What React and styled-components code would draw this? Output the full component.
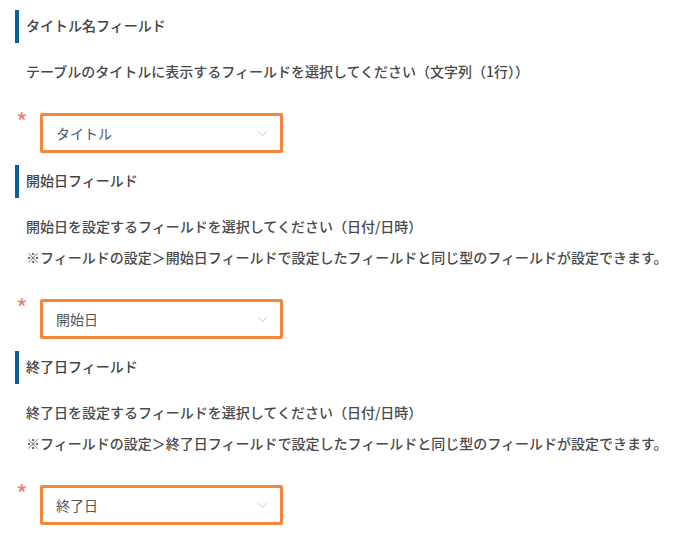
import React from "react";
import styled, { createGlobalStyle } from "styled-components";

const GlobalStyle = createGlobalStyle`
  html, body {
    margin: 0;
    padding: 0;
    background: #fff;
  }
  body {
    font-family: "Noto Sans CJK JP", "Noto Sans", sans-serif;
    color: #4a4a4a;
  }
`;

const sections = [
  {
    label: "タイトル名フィールド",
    desc: ["テーブルのタイトルに表示するフィールドを選択してください（文字列（1行））"],
    value: "タイトル",
  },
  {
    label: "開始日フィールド",
    desc: [
      "開始日を設定するフィールドを選択してください（日付/日時）",
      "※フィールドの設定＞開始日フィールドで設定したフィールドと同じ型のフィールドが設定できます。",
    ],
    value: "開始日",
  },
  {
    label: "終了日フィールド",
    desc: [
      "終了日を設定するフィールドを選択してください（日付/日時）",
      "※フィールドの設定＞終了日フィールドで設定したフィールドと同じ型のフィールドが設定できます。",
    ],
    value: "終了日",
  },
];

function Chevron() {
  return (
    <svg width="11" height="7" viewBox="0 0 11 7" fill="none">
      <path d="M1 1 L5.5 5.5 L10 1" stroke="#c2cbd0" strokeWidth="1" />
    </svg>
  );
}

function App() {
  return (
    <>
      <GlobalStyle />
      <Page>
        {sections.map((s) => (
          <Section key={s.label}>
            <Label>{s.label}</Label>
            <Desc>
              {s.desc.map((line) => (
                <DescLine key={line}>{line}</DescLine>
              ))}
            </Desc>
            <Row>
              <Required>*</Required>
              <Select>
                <Value>{s.value}</Value>
                <Chevron />
              </Select>
            </Row>
          </Section>
        ))}
      </Page>
    </>
  );
}

export default App;

let Page = styled.div`
  display: flex;
  flex-direction: column;
  gap: 12px;
  padding: 10px 0 0 15px;
`;

let Section = styled.section`
  display: flex;
  flex-direction: column;
`;

let Label = styled.div`
  height: 33px;
  border-left: 4px solid #0a5f96;
  padding: 0 0 3px 7px;
  box-sizing: border-box;
  display: flex;
  align-items: center;
  font-size: 14px;
  font-weight: 500;
  color: #444;
`;

let Desc = styled.div`
  margin-top: 13px;
  padding-left: 11px;
`;

let DescLine = styled.p`
  margin: 0;
  line-height: 31px;
  font-size: 14px;
  font-weight: 500;
  color: #4a4a4a;
  white-space: nowrap;
`;

let Row = styled.div`
  display: flex;
  margin-top: 26px;
`;

let Required = styled.span`
  width: 24px;
  padding-left: 1px;
  margin-top: -3px;
  font-size: 25px;
  line-height: 22px;
  color: #f07e6b;
`;

let Select = styled.div`
  box-sizing: border-box;
  width: 243px;
  height: 40px;
  border: 3px solid #f5853a;
  border-radius: 2px;
  background: #fff;
  padding: 0 12px 0 13px;
  display: flex;
  align-items: center;
  justify-content: space-between;
`;

let Value = styled.span`
  font-size: 14px;
  color: #555;
`;
